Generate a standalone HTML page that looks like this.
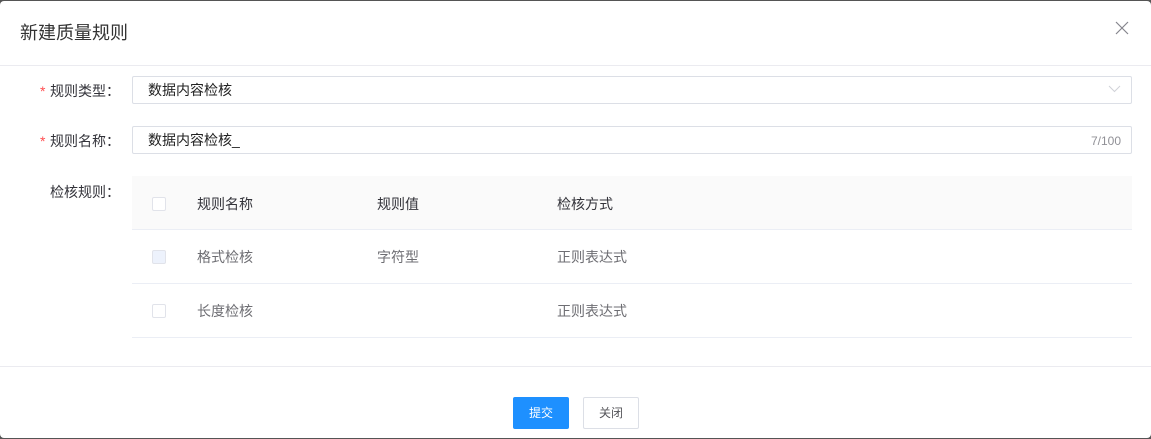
<!DOCTYPE html>
<html lang="zh">
<head>
<meta charset="utf-8">
<style>
html,body{margin:0;padding:0;width:1151px;height:439px;overflow:hidden;background:#555}
body{font-family:"Liberation Sans","Noto Sans CJK SC",sans-serif;position:relative}
#d{position:absolute;left:0;top:1px;width:1151px;height:437px;background:#fff;border-radius:4px}
.a{position:absolute;white-space:nowrap;line-height:20px}
.l{position:absolute;left:0;width:1151px;height:1px;background:#ebebf0}
.box{position:absolute;left:132px;width:998px;height:26px;border:1px solid #dcdfe6;border-radius:2px;background:#fff}
.cb{position:absolute;left:152px;width:12px;height:12px;border:1px solid #e1e3ea;border-radius:2px;background:#fff}
.tl{position:absolute;left:132px;width:1000px;height:1px;background:#ebeef5}
.th{font-size:14px;color:#33333a}
.td{font-size:14px;color:#6e6e73}
.lb{font-size:14px;color:#33333a}
.r{font-size:14px;color:#ff4d4f}
.v{font-size:14px;color:#222}
</style>
</head>
<body>
<div id="d"></div>
<div class="a" style="left:20px;top:21px;font-size:18px;line-height:24px;color:#333">新建质量规则</div>
<svg style="position:absolute;left:1114px;top:20px" width="16" height="16" viewBox="0 0 16 16"><path d="M2 2L14 14M14 2L2 14" stroke="#85858d" stroke-width="1.2" fill="none"/></svg>
<div class="l" style="top:65px"></div>

<div class="a r" style="left:40px;top:81px">*</div>
<div class="a lb" style="left:50px;top:81px">规则类型：</div>
<div class="box" style="top:76px"></div>
<div class="a v" style="left:148px;top:80px">数据内容检核</div>
<svg style="position:absolute;left:1108px;top:85px" width="13" height="8" viewBox="0 0 13 8"><path d="M1 1L6.5 6.5L12 1" stroke="#d0d2d8" stroke-width="1" fill="none"/></svg>

<div class="a r" style="left:40px;top:131px">*</div>
<div class="a lb" style="left:50px;top:131px">规则名称：</div>
<div class="box" style="top:126px"></div>
<div class="a v" style="left:148px;top:130px">数据内容检核_</div>
<div class="a" style="left:1091px;top:131px;font-size:12px;color:#909096">7/100</div>

<div class="a lb" style="left:50px;top:182px">检核规则：</div>
<div style="position:absolute;left:132px;top:176px;width:1000px;height:53px;background:#fafafa"></div>
<div class="tl" style="top:229px"></div>
<div class="tl" style="top:283px"></div>
<div class="tl" style="top:337px"></div>

<div class="cb" style="top:197px"></div>
<div class="cb" style="top:250px;background:#edf2fc"></div>
<div class="cb" style="top:304px"></div>

<div class="a th" style="left:197px;top:194px">规则名称</div>
<div class="a th" style="left:377px;top:194px">规则值</div>
<div class="a th" style="left:557px;top:194px">检核方式</div>
<div class="a td" style="left:197px;top:247px">格式检核</div>
<div class="a td" style="left:377px;top:247px">字符型</div>
<div class="a td" style="left:557px;top:247px">正则表达式</div>
<div class="a td" style="left:197px;top:301px">长度检核</div>
<div class="a td" style="left:557px;top:301px">正则表达式</div>

<div class="l" style="top:366px"></div>
<div class="a" style="left:513px;top:397px;width:56px;height:32px;background:#1e90ff;border-radius:2px;color:#fff;font-size:12px;line-height:32px;text-align:center">提交</div>
<div class="a" style="left:583px;top:397px;width:54px;height:30px;border:1px solid #dcdfe6;border-radius:2px;background:#fff;color:#55555a;font-size:12px;line-height:30px;text-align:center">关闭</div>
</body>
</html>
